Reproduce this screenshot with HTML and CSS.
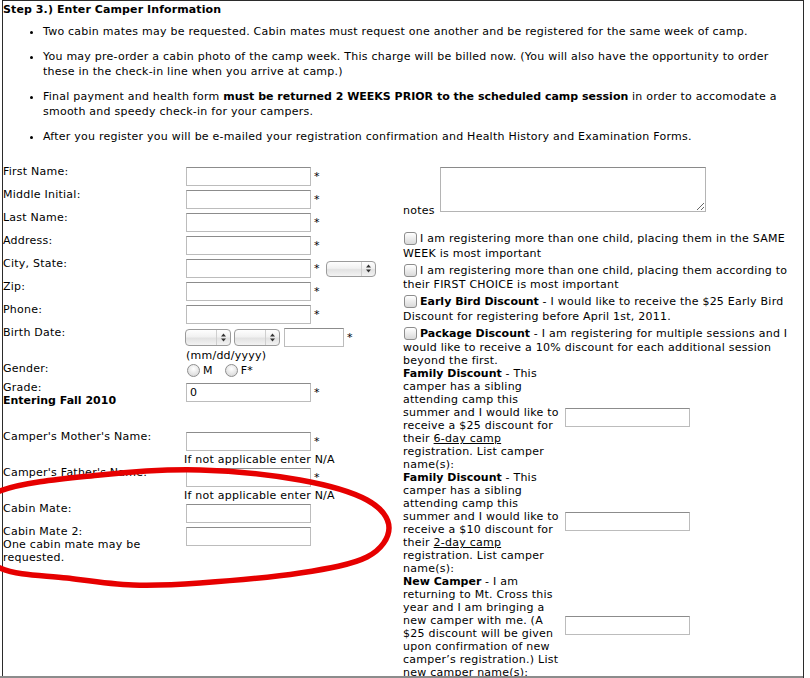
FILE: index.html
```html
<!DOCTYPE html>
<html>
<head>
<meta charset="utf-8">
<title>Step 3 - Enter Camper Information</title>
<link rel="stylesheet" href="styles.css">
</head>
<body>
<div class="frame">
  <div class="step-title">Step 3.) Enter Camper Information</div>
  <ul class="rules">
    <li>Two cabin mates may be requested. Cabin mates must request one another and be registered for the same week of camp.</li>
    <li>You may pre-order a cabin photo of the camp week. This charge will be billed now. (You will also have the opportunity to order these in the check-in line when you arrive at camp.)</li>
    <li>Final payment and health form <b>must be returned 2 WEEKS PRIOR to the scheduled camp session</b> in order to accomodate a smooth and speedy check-in for your campers.</li>
    <li>After you register you will be e-mailed your registration confirmation and Health History and Examination Forms.</li>
  </ul>

  <div class="form">
    <div class="col-left">
      <div class="row"><div class="label">First Name:</div><div class="field"><div class="line"><input class="text" type="text"><span class="req">*</span></div></div></div>
      <div class="row"><div class="label">Middle Initial:</div><div class="field"><div class="line"><input class="text" type="text"><span class="req">*</span></div></div></div>
      <div class="row"><div class="label">Last Name:</div><div class="field"><div class="line"><input class="text" type="text"><span class="req">*</span></div></div></div>
      <div class="row"><div class="label">Address:</div><div class="field"><div class="line"><input class="text" type="text"><span class="req">*</span></div></div></div>
      <div class="row"><div class="label">City, State:</div><div class="field"><div class="line"><input class="text" type="text"><span class="req">*</span><span class="sel sel-state"><span class="arrows"><svg width="5" height="9" viewBox="0 0 5 9"><path d="M0 3.5 L2.5 0.5 L5 3.5Z M0 5.5 L2.5 8.5 L5 5.5Z" fill="#333"/></svg></span></span></div></div></div>
      <div class="row"><div class="label">Zip:</div><div class="field"><div class="line"><input class="text" type="text"><span class="req">*</span></div></div></div>
      <div class="row"><div class="label">Phone:</div><div class="field"><div class="line"><input class="text" type="text"><span class="req">*</span></div></div></div>
      <div class="row"><div class="label">Birth Date:</div><div class="field">
        <div class="line">
          <span class="sel sel-date"><span class="arrows"><svg width="5" height="9" viewBox="0 0 5 9"><path d="M0 3.5 L2.5 0.5 L5 3.5Z M0 5.5 L2.5 8.5 L5 5.5Z" fill="#333"/></svg></span></span>
          <span class="sel sel-date sel-next"><span class="arrows"><svg width="5" height="9" viewBox="0 0 5 9"><path d="M0 3.5 L2.5 0.5 L5 3.5Z M0 5.5 L2.5 8.5 L5 5.5Z" fill="#333"/></svg></span></span>
          <input class="text year" type="text"><span class="req">*</span>
        </div>
        <div class="hint hint-date">(mm/dd/yyyy)</div>
      </div></div>
      <div class="row row-gender"><div class="label">Gender:</div><div class="field">
        <div class="gender"><span class="radio"></span><span class="opt">M</span><span class="radio radio-next"></span><span class="opt">F*</span></div>
      </div></div>
      <div class="row"><div class="label">Grade:<br><b>Entering Fall 2010</b></div><div class="field"><div class="line"><input class="text" type="text" value="0"><span class="req">*</span></div></div></div>
      <div class="row row-parent"><div class="label">Camper's Mother's Name:</div><div class="field"><div class="line"><input class="text" type="text"><span class="req">*</span></div><div class="hint">If not applicable enter N/A</div></div></div>
      <div class="row"><div class="label">Camper's Father's Name:</div><div class="field"><div class="line"><input class="text" type="text"><span class="req">*</span></div><div class="hint">If not applicable enter N/A</div></div></div>
      <div class="row"><div class="label">Cabin Mate:</div><div class="field"><div class="line"><input class="text" type="text"></div></div></div>
      <div class="row"><div class="label">Cabin Mate 2:<br>One cabin mate may be<br>requested.</div><div class="field"><div class="line"><input class="text" type="text"></div></div></div>
    </div>

    <div class="col-right">
      <div class="notes-row"><span class="notes-label">notes</span><textarea class="notes"></textarea></div>
      <div class="opt-item"><span class="check"></span>I am registering more than one child, placing them in the SAME WEEK is most important</div>
      <div class="opt-item"><span class="check"></span>I am registering more than one child, placing them according to their FIRST CHOICE is most important</div>
      <div class="opt-item"><span class="check"></span><b>Early Bird Discount</b> - I would like to receive the $25 Early Bird Discount for registering before April 1st, 2011.</div>
      <div class="opt-item"><span class="check"></span><b>Package Discount</b> - I am registering for multiple sessions and I would like to receive a 10% discount for each additional session beyond the first.</div>
      <div class="disc">
        <div class="disc-text"><b>Family Discount</b> - This<br>camper has a sibling<br>attending camp this<br>summer and I would like to<br>receive a $25 discount for<br>their <u>6-day camp</u><br>registration. List camper<br>name(s):</div>
        <input class="text" type="text">
      </div>
      <div class="disc">
        <div class="disc-text"><b>Family Discount</b> - This<br>camper has a sibling<br>attending camp this<br>summer and I would like to<br>receive a $10 discount for<br>their <u>2-day camp</u><br>registration. List camper<br>name(s):</div>
        <input class="text" type="text">
      </div>
      <div class="disc">
        <div class="disc-text"><b>New Camper</b> - I am<br>returning to Mt. Cross this<br>year and I am bringing a<br>new camper with me. (A<br>$25 discount will be given<br>upon confirmation of new<br>camper’s registration.) List<br>new camper name(s):</div>
        <input class="text" type="text">
      </div>
    </div>
  </div>
</div>
<div class="window-edge"></div>
<svg class="marker" width="810" height="678" viewBox="0 0 810 678">
  <path d="M -45 530 C -45 517.2, -24.2 500.2, 0 491 C 24.2 481.8, 66.7 478.5, 100 475 C 133.3 471.5, 166.7 469.2, 200 470 C 233.3 470.8, 272.2 475, 300 480 C 327.8 485, 352.2 492, 367 500 C 381.8 508, 389 518.5, 389 528 C 389 537.5, 381.8 549.5, 367 557 C 352.2 564.5, 327.8 568.7, 300 573 C 272.2 577.3, 227.8 581, 200 583 C 172.2 585, 155.2 585.8, 133 585 C 110.8 584.2, 89.2 580.8, 67 578 C 44.8 575.2, 18.7 576, 0 568 C -18.7 560, -45 542.8, -45 530 Z" fill="none" stroke="#e60000" stroke-width="5.5" stroke-linecap="round" stroke-linejoin="round"/>
</svg>
</body>
</html>
```

FILE: styles.css
```css
html, body {
  margin: 0;
  height: 678px;
  overflow: hidden;
  background: #fff;
}

body {
  position: relative;
  font-family: "DejaVu Sans", Verdana, sans-serif;
  font-size: 11px;
  letter-spacing: 0.24px;
  color: #000;
}

b {
  letter-spacing: 0;
}

.frame {
  margin-left: 2px;
  width: 800px;
  min-height: 720px;
  border: 1px solid #2b2b2b;
  border-bottom: none;
  padding-top: 2px;
}

.step-title {
  font-weight: bold;
  letter-spacing: 0.1px;
  line-height: 13px;
  margin-bottom: 8px;
}

.rules {
  margin: 0 12px 21px 0;
  padding-left: 40px;
  line-height: 15.5px;
  list-style: disc;
}

.rules li + li {
  margin-top: 9px;
}

.form {
  display: grid;
  grid-template-columns: 400px 1fr;
  align-items: start;
}

/* left column */
.row {
  display: grid;
  grid-template-columns: 181px 1fr;
  line-height: 13px;
}

.line {
  display: flex;
  align-items: center;
  height: 19px;
  margin: 2px 0;
}

input.text {
  box-sizing: border-box;
  width: 125px;
  height: 19px;
  margin: 0 0 0 2px;
  padding: 0 3px;
  border: 1px solid #bcbcbc;
  border-top-color: #8c8c8c;
  border-radius: 0;
  background: #fff;
  font-family: "DejaVu Sans", Verdana, sans-serif;
  font-size: 11px;
  color: #000;
  outline: none;
}

input.year {
  width: 60px;
  margin-left: 4px;
}

.req {
  margin-left: 3px;
  line-height: 13px;
}

.hint {
  line-height: 13px;
}

.hint-date {
  margin-left: 2px;
}

.sel {
  box-sizing: border-box;
  display: inline-flex;
  justify-content: flex-end;
  align-items: center;
  height: 16px;
  border: 1px solid #9b9b9b;
  border-radius: 4px;
  background: linear-gradient(#fefefe, #f1f1f1 45%, #e2e2e2 55%, #f3f3f3);
}

.sel-state {
  width: 50px;
  margin-left: 6px;
}

.sel-date {
  width: 46px;
  height: 17px;
  margin-left: 1px;
}

.sel-next {
  margin-left: 3px;
}

.arrows {
  display: flex;
  align-items: center;
  justify-content: center;
  width: 13px;
  height: 100%;
  border-left: 1px solid #cfcfcf;
}

.row-gender {
  height: 19px;
}

.gender {
  display: flex;
  align-items: center;
  height: 16px;
}

.radio {
  box-sizing: border-box;
  width: 13px;
  height: 13px;
  margin-left: 3px;
  border: 1px solid #8e8e8e;
  border-radius: 50%;
  background: radial-gradient(circle at 50% 35%, #ffffff, #e4e4e4 60%, #cfcfcf);
}

.radio-next {
  margin-left: 12px;
}

.opt {
  margin-left: 3px;
}

.row-parent {
  margin-top: 23px;
}

/* right column */
.col-right {
  line-height: 13px;
}

.notes-row {
  display: flex;
  align-items: flex-end;
  margin-bottom: 11px;
}

.notes-label {
  width: 37px;
}

textarea.notes {
  box-sizing: border-box;
  width: 266px;
  height: 45px;
  margin: 2px 0 5px 0;
  border: 1px solid #b4b4b4;
  border-top-color: #8a8a8a;
  font-family: "DejaVu Sans", Verdana, sans-serif;
  font-size: 11px;
  outline: none;
}

.check {
  display: inline-block;
  box-sizing: border-box;
  width: 13px;
  height: 13px;
  margin: 4px 3px 1.5px 1px;
  vertical-align: -5px;
  border: 1px solid #8d8d8d;
  border-radius: 3px;
  background: linear-gradient(#ffffff, #ececec 50%, #d9d9d9);
}

.disc {
  display: flex;
  align-items: center;
}

.disc-text {
  width: 160px;
  white-space: nowrap;
}

.disc input.text {
  margin-bottom: 3px;
}

/* overlays */
.window-edge {
  position: fixed;
  left: 0;
  bottom: 0;
  width: 803px;
  height: 2px;
  background: #8c8c8c;
}

.marker {
  position: absolute;
  left: 0;
  top: 0;
  pointer-events: none;
}
```
